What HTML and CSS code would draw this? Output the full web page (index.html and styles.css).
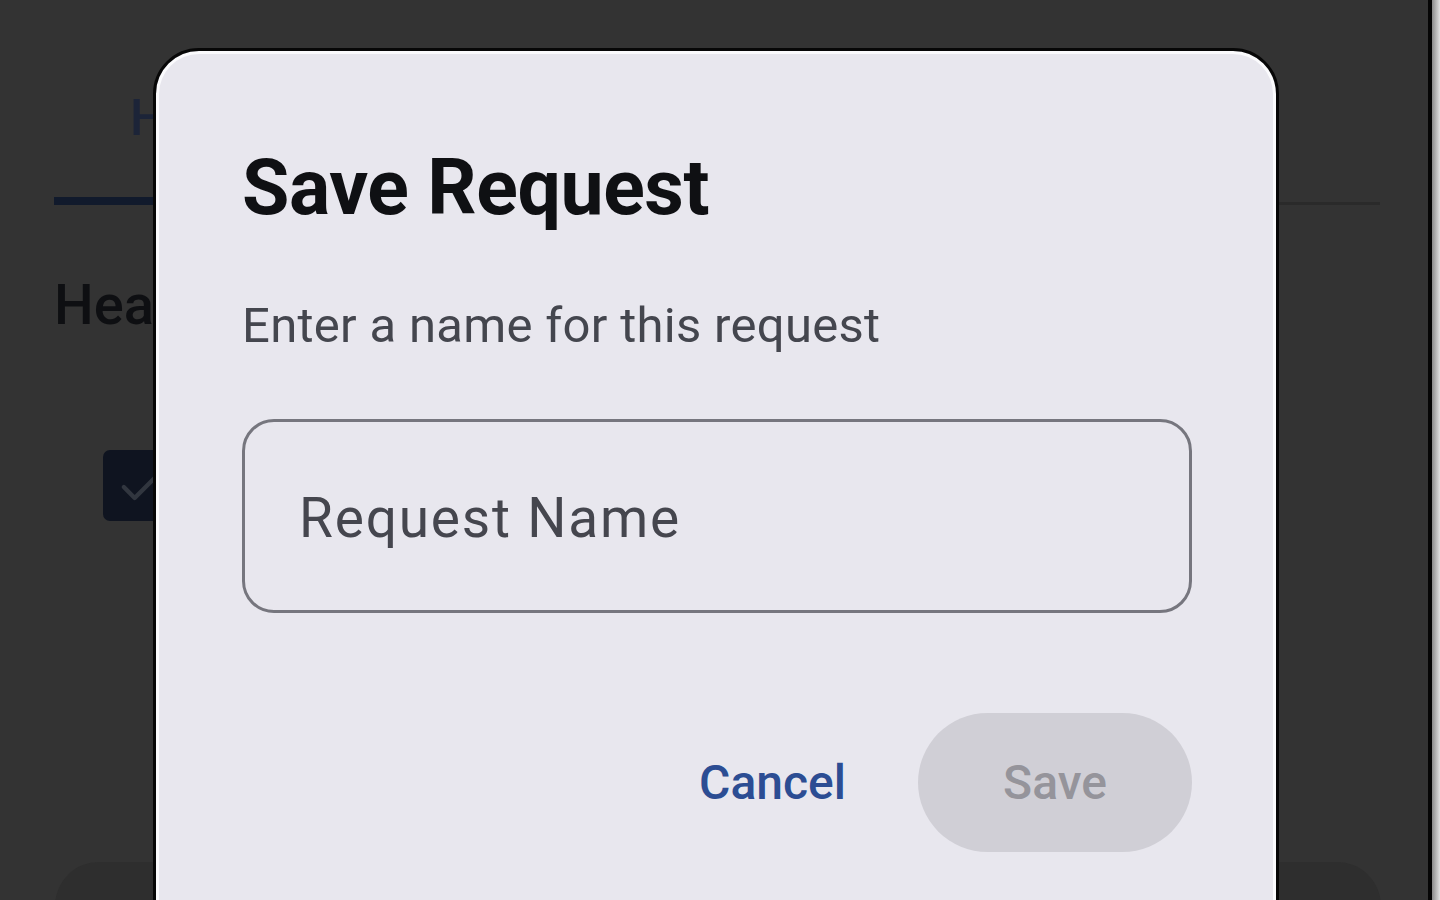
FILE: index.html
```html
<!DOCTYPE html>
<html lang="en">
<head>
<meta charset="utf-8">
<title>Save Request</title>
<link rel="stylesheet" href="styles.css">
</head>
<body>
<div class="device">
  <div class="screen">
    <div class="app">
      <div class="tabs">
        <div class="tab active"><span class="tab-label">Headers</span></div>
        <div class="tab"><span class="tab-label">Body</span></div>
      </div>
      <h2 class="section-title">Headers</h2>
      <div class="header-row">
        <span class="checkbox">
          <svg viewBox="0 0 24 24" width="52" height="52" aria-hidden="true"><path d="M5 12.5l5 5L20 7.5" fill="none" stroke="#31363f" stroke-width="2" stroke-linecap="round" stroke-linejoin="round"/></svg>
        </span>
      </div>
      <div class="card"></div>
    </div>

    <div class="dialog" role="dialog" aria-labelledby="dlg-title">
      <h1 class="dialog-title" id="dlg-title">Save Request</h1>
      <p class="dialog-text">Enter a name for this request</p>
      <div class="field">
        <span class="placeholder">Request Name</span>
      </div>
      <div class="actions">
        <button class="btn btn-text">Cancel</button>
        <button class="btn btn-filled" disabled>Save</button>
      </div>
    </div>
  </div>
  <div class="edge"></div>
</div>
</body>
</html>
```

FILE: styles.css
```css
* { box-sizing: border-box; }

html, body {
  margin: 0;
  padding: 0;
  width: 1440px;
  height: 900px;
  overflow: hidden;
  background: #dcdcdc;
  font-family: Roboto, "Noto Sans", "Liberation Sans", sans-serif;
}

.device {
  display: flex;
  width: 1440px;
  height: 900px;
}

.screen {
  position: relative;
  width: 1432px;
  height: 900px;
  background: #333333;
  border-right: 4px solid #050505;
  overflow: hidden;
}

.edge {
  flex: 1;
  background: linear-gradient(to right, #8a8a8a, #e2e2e2);
}

.app {
  padding: 0 0 0 54px;
  width: 1380px;
}

.tabs {
  display: flex;
  border-bottom: 3px solid #2a2a2a;
  margin-top: 92px;
}

.tab {
  padding: 0 0 0 76px;
  width: 520px;
  height: 110px;
  position: relative;
}

.tab-label {
  font-size: 50px;
  font-weight: 500;
  color: #1c2438;
  line-height: 50px;
  display: block;
  padding-top: 1px;
}

.tab.active::after {
  content: "";
  position: absolute;
  left: 0;
  right: 0;
  bottom: -3px;
  height: 8px;
  background: #111a2c;
}

.section-title {
  margin: 68px 0 0 0;
  font-size: 56px;
  font-weight: 500;
  color: #0e0f12;
  line-height: 64px;
}

.header-row {
  display: flex;
  align-items: center;
  gap: 30px;
  margin: 113px 0 0 49px;
}

.checkbox {
  width: 72px;
  height: 71px;
  border-radius: 7px;
  background: #0f1420;
  display: flex;
  align-items: center;
  justify-content: center;
}

.card {
  margin-top: 341px;
  height: 200px;
  border-radius: 44px;
  background: #2e2e2e;
  width: 1326px;
  margin-left: 1px;
}

.dialog {
  position: absolute;
  left: 153px;
  top: 48px;
  width: 1126px;
  height: 920px;
  background: #e8e7ee;
  border: 3px solid #070707;
  border-radius: 46px;
  box-shadow: inset 0 0 0 3px #fbfbfd;
  padding: 91px 84px 0 86px;
}

.dialog-title {
  margin: 0;
  font-size: 77px;
  font-weight: 700;
  line-height: 92px;
  color: #0f1013;
  letter-spacing: -0.4px;
}

.dialog-text {
  margin: 59px 0 0 0;
  font-size: 49px;
  line-height: 66px;
  color: #44464e;
  letter-spacing: 0.3px;
}

.field {
  margin-top: 60px;
  height: 194px;
  width: 950px;
  border: 3px solid #76767e;
  border-radius: 32px;
  display: flex;
  align-items: center;
  padding: 0 0 0 54px;
}

.placeholder {
  font-size: 55px;
  color: #45464e;
  letter-spacing: 1.8px;
  padding-top: 4px;
}

.actions {
  display: flex;
  justify-content: flex-end;
  align-items: center;
  gap: 72px;
  margin-top: 100px;
  width: 950px;
}

.btn {
  font-family: inherit;
  border: none;
  font-size: 48px;
  font-weight: 500;
  letter-spacing: 0;
  cursor: pointer;
}

.btn-text {
  background: transparent;
  color: #2c4d93;
  padding: 0;
}

.btn-filled {
  background: #d0cfd6;
  color: #95949b;
  height: 139px;
  width: 274px;
  border-radius: 70px;
  padding: 0;
}
```
